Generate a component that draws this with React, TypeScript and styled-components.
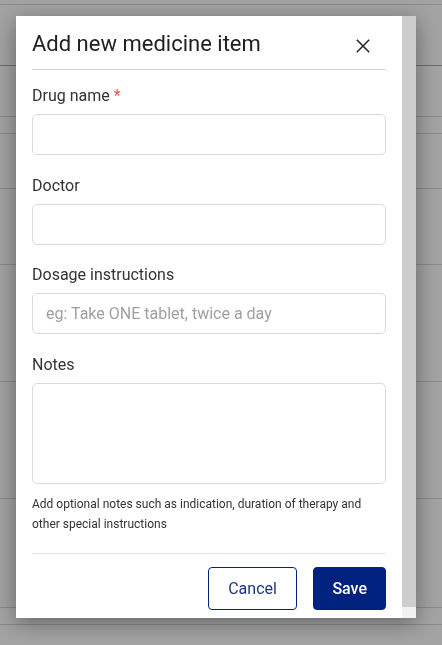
import React from 'react';
import styled, { createGlobalStyle } from 'styled-components';

const GlobalStyle = createGlobalStyle`
  * { box-sizing: border-box; }
  body {
    margin: 0;
    font-family: Roboto, 'Liberation Sans', Arial, sans-serif;
    background: #fff;
  }
`;

const PageBehind = styled.div`
  height: 645px;
  overflow: hidden;
  background: #fff;
`;

const PageRow = styled.div<{ $h: number; $strong?: boolean }>`
  height: ${p => p.$h + 1}px;
  border-bottom: 1px solid ${p => (p.$strong ? '#a8a8a8' : '#d8d8d8')};
`;

const Overlay = styled.div`
  position: fixed;
  inset: 0;
  background: rgba(0, 0, 0, 0.36);
  padding: 16px;
`;

const Modal = styled.div`
  display: flex;
  width: 400px;
  height: 602px;
  background: #fff;
  overflow: hidden;
  box-shadow: 0 5px 22px rgba(0, 0, 0, 0.4);
`;

const Inner = styled.div`
  flex: 1;
  min-width: 0;
  padding: 0 16px 20px;
`;

const ScrollRail = styled.div`
  width: 14px;
  flex: none;
  background: #f1f1f1;
`;

const ScrollThumb = styled.div`
  height: 591px;
  background: #cdcdcd;
`;

const Header = styled.div`
  display: flex;
  align-items: center;
  justify-content: space-between;
  padding: 12px 0 9px;
  border-bottom: 1px solid #d6d6d6;
`;

const Title = styled.h2`
  margin: 0;
  font-size: 22px;
  line-height: 32px;
  font-weight: 400;
  color: #212121;
`;

const CloseButton = styled.button`
  display: flex;
  border: none;
  background: none;
  padding: 2px;
  margin: 4px 14px 0 0;
  color: #222;
  cursor: pointer;
`;

const Form = styled.div`
  display: flex;
  flex-direction: column;
  gap: 18.5px;
  padding-top: 14px;
`;

const Field = styled.div`
  display: flex;
  flex-direction: column;
`;

const Label = styled.label`
  font-size: 16px;
  line-height: 24px;
  color: #333;
  margin-bottom: 6px;
`;

const Required = styled.span`
  color: #ef5350;
`;

const Input = styled.input`
  height: 41px;
  border: 1px solid #dadada;
  border-radius: 5px;
  padding: 0 13px;
  font: inherit;
  font-size: 16px;
  color: #333;
  outline: none;
  &::placeholder { color: #a0a0a0; }
`;

const TextArea = styled.textarea`
  height: 101px;
  border: 1px solid #dadada;
  border-radius: 5px;
  padding: 10px 13px;
  font: inherit;
  font-size: 16px;
  resize: none;
  outline: none;
`;

const Help = styled.p`
  margin: 10px 0 0;
  font-size: 12px;
  line-height: 20px;
  color: #333;
`;

const Footer = styled.div`
  display: flex;
  justify-content: flex-end;
  gap: 16px;
  margin-top: 19px;
  padding-top: 13px;
  border-top: 1px solid #e2e2e2;
`;

const Button = styled.button<{ $primary?: boolean }>`
  height: 43px;
  padding: 0 ${p => (p.$primary ? '18px' : '19.5px')};
  border-radius: 4px;
  font-family: inherit;
  font-size: 16px;
  font-weight: ${p => (p.$primary ? 500 : 400)};
  border: 1px solid #01237f;
  background: ${p => (p.$primary ? '#01237f' : '#fff')};
  color: ${p => (p.$primary ? '#fff' : '#1d3585')};
  cursor: pointer;
`;

const rows = [
  { h: 4 }, { h: 60, strong: true }, { h: 50 }, { h: 16 }, { h: 54 },
  { h: 75 }, { h: 116 }, { h: 116 }, { h: 108 }, { h: 16 },
];

const CloseIcon = () => (
  <svg width="14" height="14" viewBox="0 0 14 14" fill="none" stroke="currentColor" strokeWidth="1.5">
    <path d="M0.8 0.8 L13.2 13.2 M13.2 0.8 L0.8 13.2" />
  </svg>
);

const App: React.FC = () => (
  <>
    <GlobalStyle />
    <PageBehind>
      {rows.map((r, i) => (
        <PageRow key={i} $h={r.h} $strong={r.strong} />
      ))}
    </PageBehind>
    <Overlay>
      <Modal>
        <Inner>
          <Header>
            <Title>Add new medicine item</Title>
            <CloseButton aria-label="Close"><CloseIcon /></CloseButton>
          </Header>
          <Form>
            <Field>
              <Label>Drug name <Required>*</Required></Label>
              <Input />
            </Field>
            <Field>
              <Label>Doctor</Label>
              <Input />
            </Field>
            <Field>
              <Label>Dosage instructions</Label>
              <Input placeholder="eg: Take ONE tablet, twice a day" />
            </Field>
            <Field>
              <Label>Notes</Label>
              <TextArea />
              <Help>Add optional notes such as indication, duration of therapy and other special instructions</Help>
            </Field>
          </Form>
          <Footer>
            <Button>Cancel</Button>
            <Button $primary>Save</Button>
          </Footer>
        </Inner>
        <ScrollRail>
          <ScrollThumb />
        </ScrollRail>
      </Modal>
    </Overlay>
  </>
);

export default App;
